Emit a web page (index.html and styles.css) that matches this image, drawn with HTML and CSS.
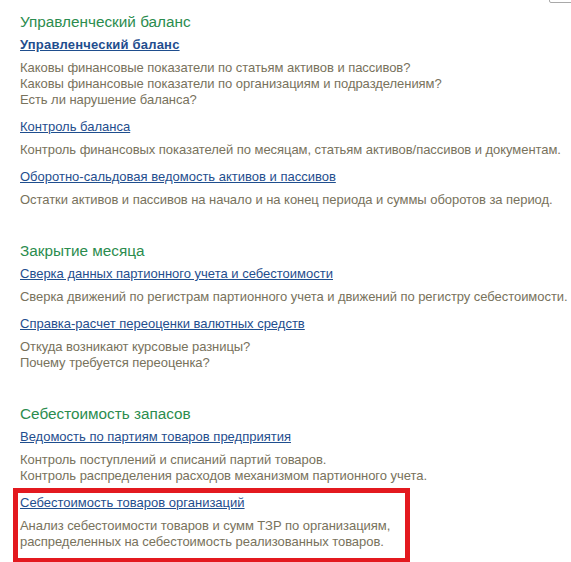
FILE: index.html
```html
<!DOCTYPE html>
<html lang="ru">
<head>
<meta charset="utf-8">
<title>Отчеты</title>
<link rel="stylesheet" href="styles.css">
</head>
<body>
<div class="corner"></div>
<div class="page">
  <section class="group">
    <h2 class="group-title">Управленческий баланс</h2>
    <div class="item">
      <a class="link link-bold" href="#">Управленческий баланс</a>
      <p class="desc">Каковы финансовые показатели по статьям активов и пассивов?<br>Каковы финансовые показатели по организациям и подразделениям?<br>Есть ли нарушение баланса?</p>
    </div>
    <div class="item">
      <a class="link" href="#">Контроль баланса</a>
      <p class="desc">Контроль финансовых показателей по месяцам, статьям активов/пассивов и документам.</p>
    </div>
    <div class="item">
      <a class="link" href="#">Оборотно-сальдовая ведомость активов и пассивов</a>
      <p class="desc">Остатки активов и пассивов на начало и на конец периода и суммы оборотов за период.</p>
    </div>
  </section>
  <section class="group">
    <h2 class="group-title">Закрытие месяца</h2>
    <div class="item">
      <a class="link" href="#">Сверка данных партионного учета и себестоимости</a>
      <p class="desc">Сверка движений по регистрам партионного учета и движений по регистру себестоимости.</p>
    </div>
    <div class="item">
      <a class="link" href="#">Справка-расчет переоценки валютных средств</a>
      <p class="desc">Откуда возникают курсовые разницы?<br>Почему требуется переоценка?</p>
    </div>
  </section>
  <section class="group">
    <h2 class="group-title">Себестоимость запасов</h2>
    <div class="item">
      <a class="link" href="#">Ведомость по партиям товаров предприятия</a>
      <p class="desc">Контроль поступлений и списаний партий товаров.<br>Контроль распределения расходов механизмом партионного учета.</p>
    </div>
    <div class="item item-marked">
      <a class="link" href="#">Себестоимость товаров организаций</a>
      <p class="desc">Анализ себестоимости товаров и сумм ТЗР по организациям,<br>распределенных на себестоимость реализованных товаров.</p>
    </div>
  </section>
</div>
</body>
</html>
```
FILE: styles.css
```css
html, body {
  margin: 0;
  padding: 0;
  background: #ffffff;
}
body {
  font-family: "Liberation Sans", Arial, sans-serif;
  font-size: 13px;
  line-height: 16px;
  position: relative;
  overflow: hidden;
  height: 562px;
}
.corner {
  position: absolute;
  top: -12px;
  right: -6px;
  width: 26px;
  height: 13px;
  border: 1px solid #a9a9a9;
  border-radius: 2px;
}
.page {
  padding: 14px 0 0 20px;
}
.group {
  margin-bottom: 35px;
}
.group:last-child {
  margin-bottom: 0;
}
.group-title {
  margin: 0 0 7px 0;
  font-size: 15.3px;
  font-weight: normal;
  line-height: 16px;
  color: #2b8c4e;
}
.item {
  margin-bottom: 11px;
}
.item:last-child {
  margin-bottom: 0;
}
.link {
  display: inline-block;
  color: #1f4e8e;
  text-decoration: underline;
}
.link-bold {
  font-weight: bold;
  letter-spacing: 0.2px;
}
.desc {
  margin: 7px 0 0 0;
  color: #78725c;
  white-space: nowrap;
  letter-spacing: -0.05px;
}
.item-marked {
  margin: -7px 0 0 -7px;
  padding: 2px 2px 8px 2px;
  border: 5px solid #e3191f;
  width: 383px;
}
```
